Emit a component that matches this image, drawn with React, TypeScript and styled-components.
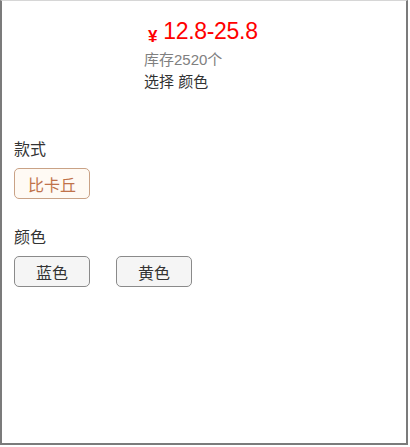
import React from "react";
import styled, { createGlobalStyle } from "styled-components";

const GlobalStyle = createGlobalStyle`
    html, body {
        margin: 0;
        padding: 0;
        background: #fff;
    }
    body {
        font-family: "Liberation Sans", "Noto Sans CJK SC", sans-serif;
    }
`;

interface Option {
    label: string;
    selected?: boolean;
}

const styleOptions: Option[] = [{ label: "比卡丘", selected: true }];
const colorOptions: Option[] = [{ label: "蓝色" }, { label: "黄色" }];

const App: React.FC = () => {
    return (
        <>
            <GlobalStyle />
            <Frame>
                <Header>
                    <Thumb />
                    <Info>
                        <Price>
                            <Yen>¥</Yen>
                            <span>12.8-25.8</span>
                        </Price>
                        <Stock>库存2520个</Stock>
                        <Chosen>选择 颜色</Chosen>
                    </Info>
                </Header>

                <Section>
                    <Label>款式</Label>
                    <OptionRow>
                        {styleOptions.map((o) => (
                            <OptionButton key={o.label} $selected={o.selected}>
                                {o.label}
                            </OptionButton>
                        ))}
                    </OptionRow>
                </Section>

                <Section $gap={27}>
                    <Label>颜色</Label>
                    <OptionRow>
                        {colorOptions.map((o) => (
                            <OptionButton key={o.label} $selected={o.selected}>
                                {o.label}
                            </OptionButton>
                        ))}
                    </OptionRow>
                </Section>
            </Frame>
        </>
    );
};

const Frame = styled.div`
    box-sizing: border-box;
    width: 408px;
    height: 445px;
    border: 2px solid #7b7b7b;
    border-top: 1px solid #d6d6d6;
    background: #fff;
    padding: 0 12px;
`;

const Header = styled.div`
    display: flex;
    gap: 12px;
    padding-top: 16px;
    height: 123px;
    box-sizing: border-box;
`;

const Thumb = styled.div`
    width: 118px;
    flex-shrink: 0;
`;

const Info = styled.div`
    display: flex;
    flex-direction: column;
`;

const Price = styled.div`
    color: #f00;
    font-size: 23px;
    line-height: 28px;
    letter-spacing: -0.3px;
    display: flex;
    align-items: baseline;
    margin-left: 4px;
`;

const Yen = styled.span`
    font-size: 17px;
    margin-right: 6px;
    font-weight: bold;
    transform: translateY(3px);
`;

const Stock = styled.div`
    color: #808080;
    font-size: 15px;
    line-height: 22px;
    margin-top: 1px;
`;

const Chosen = styled.div`
    color: #333;
    font-size: 15px;
    line-height: 22px;
`;

const Section = styled.div<{ $gap?: number }>`
    display: flex;
    flex-direction: column;
    margin-top: ${(p) => p.$gap ?? 14}px;
`;

const Label = styled.div`
    color: #333;
    font-size: 16px;
    line-height: 24px;
`;

const OptionRow = styled.div`
    display: flex;
    gap: 26px;
    margin-top: 6px;
`;

const OptionButton = styled.div<{ $selected?: boolean }>`
    box-sizing: border-box;
    width: 76px;
    height: 31px;
    display: flex;
    align-items: center;
    justify-content: center;
    border-radius: 5px;
    font-size: 16px;
    border: 1px solid ${(p) => (p.$selected ? "#c9a286" : "#8a8a8a")};
    background: ${(p) => (p.$selected ? "#fffaf4" : "#f5f5f5")};
    color: ${(p) => (p.$selected ? "#c0724a" : "#333")};
`;

export default App;
